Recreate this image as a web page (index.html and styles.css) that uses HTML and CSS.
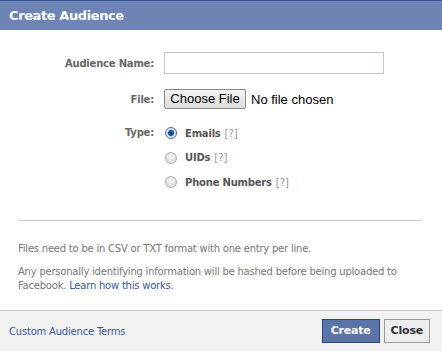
FILE: index.html
```html
<!DOCTYPE html>
<html>
<head>
<meta charset="utf-8">
<link rel="stylesheet" href="styles.css">
</head>
<body>
<div class="dialog">
  <div class="header">Create Audience</div>
  <div class="body">
    <div class="form">
      <div class="label row-name">Audience Name:</div>
      <div class="control row-name"><span class="textbox"></span></div>
      <div class="label row-file">File:</div>
      <div class="control row-file"><span class="filebtn">Choose File</span><span class="nofile">No file chosen</span></div>
      <div class="label row-type">Type:</div>
      <div class="control options">
        <div class="opt"><span class="radio checked"></span><span class="optname">Emails</span><span class="help">[?]</span></div>
        <div class="opt"><span class="radio"></span><span class="optname">UIDs</span><span class="help">[?]</span></div>
        <div class="opt"><span class="radio"></span><span class="optname">Phone Numbers</span><span class="help">[?]</span></div>
      </div>
    </div>
    <div class="sep"></div>
    <p class="note first">Files need to be in CSV or TXT format with one entry per line.</p>
    <p class="note">Any personally identifying information will be hashed before being uploaded to Facebook. <a class="link">Learn how this works.</a></p>
  </div>
  <div class="footer">
    <a class="link terms">Custom Audience Terms</a>
    <div class="buttons">
      <span class="btn create">Create</span>
      <span class="btn close">Close</span>
    </div>
  </div>
</div>
</body>
</html>
```
FILE: styles.css
```css
html, body { margin: 0; padding: 0; background: #fff; }
body { font-family: "DejaVu Sans", Tahoma, sans-serif; font-size: 11px; color: #333; }
.dialog { width: 442px; height: 351px; display: flex; flex-direction: column; }
.header {
  height: 29px; border-top: 1px solid #3b5998; background: #6d84b4;
  color: #fff; font-weight: bold; font-size: 13px; letter-spacing: -0.4px;
  line-height: 30px; padding-left: 9px; box-sizing: content-box;
}
.body { flex: 1; padding: 22px 20px 0 18px; }
.form { display: grid; grid-template-columns: 136px 1fr; column-gap: 10px; }
.label { text-align: right; font-weight: bold; color: #666; font-size: 10px; letter-spacing: -0.2px; }
.row-name { height: 22px; display: flex; align-items: center; justify-content: flex-end; }
.control.row-name { justify-content: flex-start; }
.textbox { display: block; width: 218px; height: 20px; border: 1px solid #bdc7d8; }
.row-file { margin-top: 15px; height: 20px; display: flex; align-items: center; justify-content: flex-end; }
.control.row-file { justify-content: flex-start; }
.filebtn {
  display: inline-block; height: 18px; width: 80px; box-sizing: content-box;
  border: 1px solid #888; border-radius: 2px;
  background: linear-gradient(#f4f4f4, #dcdcdc);
  font-family: "Liberation Sans", Arial, sans-serif; font-size: 13px; color: #000;
  line-height: 18px; text-align: center;
}
.nofile { font-family: "Liberation Sans", Arial, sans-serif; font-size: 13px; color: #000; margin-left: 5px; }
.row-type { margin-top: 17px; height: 14px; line-height: 14px; }
.options { margin-top: 17px; display: flex; flex-direction: column; gap: 10.5px; }
.opt { display: flex; align-items: center; height: 14px; }
.radio {
  width: 10px; height: 10px; border-radius: 50%; border: 1px solid #b4b4b4;
  background: radial-gradient(circle at 50% 40%, #f6f6f6, #d4d4d4);
  margin-left: 1px; margin-right: 8px;
}
.radio.checked {
  border-color: #4c6aa0;
  background: radial-gradient(circle, #1d4f8f 0 2.5px, #7da2cf 3px, #e2ebf6 4px);
}
.optname { font-weight: bold; color: #555; font-size: 10px; letter-spacing: -0.2px; }
.help { color: #999; font-size: 10px; margin-left: 4px; }
.sep { height: 1px; background: #ccc; margin-top: 31px; margin-right: 0; }
.note { margin: 0; color: #777; font-size: 10px; line-height: 14px; letter-spacing: -0.22px; }
.note.first { margin-top: 21px; margin-bottom: 9px; }
.link { color: #3b5998; text-decoration: none; }
.footer {
  height: 40px; border-top: 1px solid #ccc; background: #f2f2f2;
  display: flex; align-items: center; justify-content: space-between;
  padding: 0 12px 0 9px;
}
.terms { font-size: 10px; letter-spacing: -0.2px; }
.buttons { display: flex; gap: 4px; }
.btn {
  display: inline-block; height: 22px; line-height: 22px; font-weight: bold;
  font-size: 11px; padding: 0 6px; letter-spacing: -0.2px;
}
.create { background: #5b74a8; border: 1px solid #29447e; color: #fff; padding: 0 8px; }
.close { background: #eee; border: 1px solid #999; color: #333; }
```
